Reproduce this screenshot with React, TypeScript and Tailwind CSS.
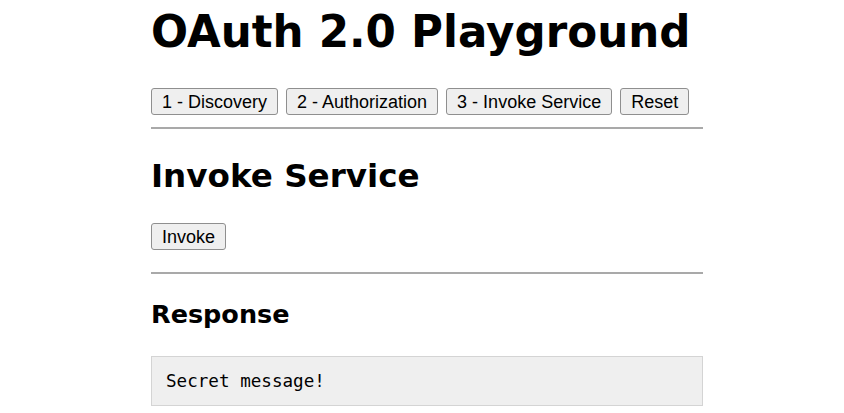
export default function App() {
  const btn =
    "h-[27px] px-[10px] bg-[#efefef] border border-[#8f8f8f] rounded-[3px] text-[18px] leading-[20px] text-black font-['Liberation_Sans',Arial,sans-serif]";
  return (
    <div className="min-h-screen bg-white text-black font-['DejaVu_Sans',sans-serif]">
      <div className="ml-[151px] w-[552px] flex flex-col pt-[6px]">
        <h1 className="text-[43.6px] leading-[52px] font-bold">OAuth 2.0 Playground</h1>
        <div className="mt-[30px] flex gap-[8px]">
          <button className={btn}>1 - Discovery</button>
          <button className={btn}>2 - Authorization</button>
          <button className={btn}>3 - Invoke Service</button>
          <button className={btn}>Reset</button>
        </div>
        <div className="mt-[12px] h-[2px] bg-[#a9a9a9]" />
        <h2 className="mt-[27px] text-[32.6px] leading-[40px] font-bold">Invoke Service</h2>
        <div className="mt-[27px] flex">
          <button className={`${btn} px-[9px]`}>Invoke</button>
        </div>
        <div className="mt-[22px] h-[2px] bg-[#a9a9a9]" />
        <h3 className="mt-[25px] text-[25.5px] leading-[30px] font-bold">Response</h3>
        <pre className="mt-[27px] h-[50px] bg-[#efefef] border border-[#d4d4d4] px-[14px] pt-[14px] pb-[12px] text-[17.6px] leading-[21px] font-['DejaVu_Sans_Mono',monospace]">Secret message!</pre>
      </div>
    </div>
  );
}
